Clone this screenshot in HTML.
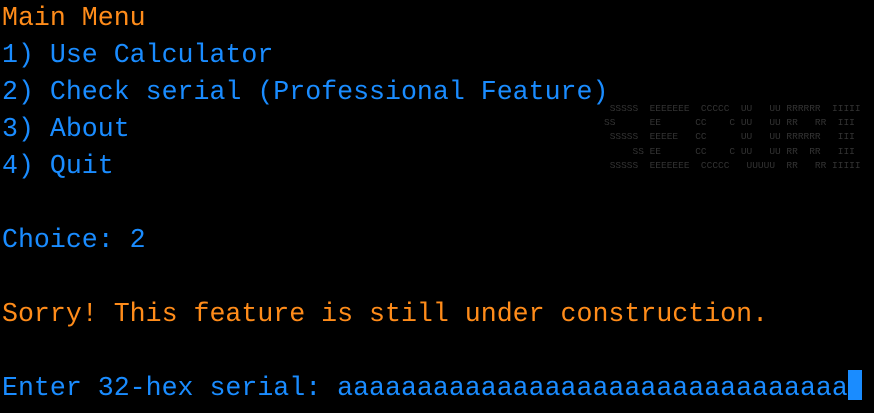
<!DOCTYPE html>
<html><head><style>
html,body{margin:0;padding:0;background:#000;width:874px;height:413px;overflow:hidden}
.t{position:absolute;left:2px;top:0;font-family:"Liberation Mono",monospace;font-size:26.6px;line-height:37px;white-space:pre;color:#1a8cff}
.o{color:#ff8c1a}
.cur{display:inline-block;width:14px;height:30px;background:#1a8cff;vertical-align:-5px}
.art{position:absolute;left:604px;top:102px;font-family:"Liberation Mono",monospace;font-size:9.5px;line-height:14.2px;white-space:pre;color:#333}
</style></head><body>
<div class="art"> SSSSS  EEEEEEE  CCCCC  UU   UU RRRRRR  IIIII
SS      EE      CC    C UU   UU RR   RR  III
 SSSSS  EEEEE   CC      UU   UU RRRRRR   III
     SS EE      CC    C UU   UU RR  RR   III
 SSSSS  EEEEEEE  CCCCC   UUUUU  RR   RR IIIII</div>
<div class="t"><span class="o">Main Menu</span>
1) Use Calculator
2) Check serial (Professional Feature)
3) About
4) Quit

Choice: 2

<span class="o">Sorry! This feature is still under construction.</span>

Enter 32-hex serial: aaaaaaaaaaaaaaaaaaaaaaaaaaaaaaaa<span class="cur"></span></div>
</body></html>
